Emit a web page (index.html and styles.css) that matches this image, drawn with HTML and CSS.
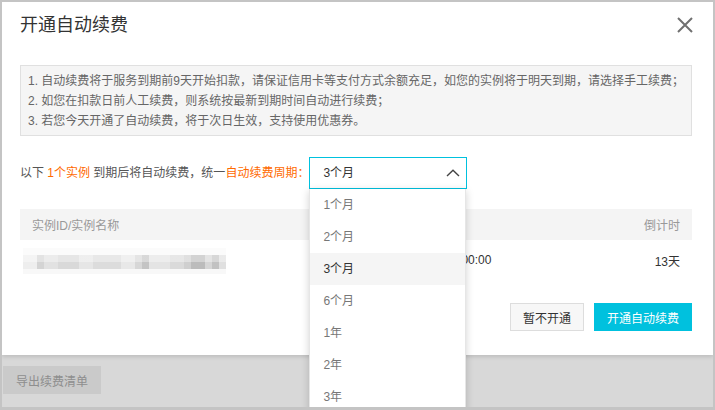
FILE: index.html
```html
<!DOCTYPE html>
<html lang="zh-CN">
<head>
<meta charset="utf-8">
<title>开通自动续费</title>
<link rel="stylesheet" href="styles.css">
</head>
<body>
<div class="frame">
    <div class="modal">
        <div class="modal-head">
            <h1>开通自动续费</h1>
            <svg class="close" width="16" height="16" viewBox="0 0 16 16">
                <path d="M1 1 L15 15 M15 1 L1 15" stroke="#707070" stroke-width="2" fill="none"/>
            </svg>
        </div>

        <div class="notice">
            <p>1. 自动续费将于服务到期前9天开始扣款，请保证信用卡等支付方式余额充足，如您的实例将于明天到期，请选择手工续费；</p>
            <p>2. 如您在扣款日前人工续费，则系统按最新到期时间自动进行续费；</p>
            <p>3. 若您今天开通了自动续费，将于次日生效，支持使用优惠券。</p>
        </div>

        <div class="period-row">
            <span>以下 <em>1个实例</em> 到期后将自动续费，统一<em>自动续费周期：</em></span>
            <div class="select">
                <div class="select-box">
                    <span>3个月</span>
                    <svg width="14" height="8" viewBox="0 0 14 8">
                        <polyline points="1,7 7,1.2 13,7" stroke="#444" stroke-width="1.4" fill="none"/>
                    </svg>
                </div>
                <ul class="options">
                    <li>1个月</li>
                    <li>2个月</li>
                    <li class="active">3个月</li>
                    <li>6个月</li>
                    <li>1年</li>
                    <li>2年</li>
                    <li>3年</li>
                </ul>
            </div>
        </div>

        <div class="grid grid-head">
            <span>实例ID/实例名称</span>
            <span>到期时间</span>
            <span>倒计时</span>
        </div>
        <div class="grid grid-row">
            <span class="blur"></span>
            <span>2019-03-20 00:00:00</span>
            <span class="num">13天</span>
        </div>

        <div class="actions">
            <button class="btn">暂不开通</button>
            <button class="btn btn-primary">开通自动续费</button>
        </div>
    </div>

    <div class="page-below">
        <button class="btn-export">导出续费清单</button>
    </div>
</div>
</body>
</html>
```

FILE: styles.css
```css
* { box-sizing: border-box; }
body { margin: 0; font-family: "Liberation Sans", "Noto Sans CJK SC", sans-serif; font-size: 12px; color: #333; }
p, ul, h1 { margin: 0; padding: 0; }
em { font-style: normal; color: #ff6a00; }
button { font-family: inherit; font-size: 12px; cursor: pointer; }

.frame { width: 715px; height: 410px; border: 2px solid #c4c4c4; border-bottom-width: 3px; overflow: hidden; background: #d8d8d8; }

/* dialog */
.modal { position: relative; z-index: 1; background: #fff; padding: 0 21px 24px 18px; box-shadow: 0 2px 4px rgba(0, 0, 0, .12); }
.modal-head { height: 46px; display: flex; align-items: center; justify-content: space-between; }
.modal-head h1 { font-size: 18px; font-weight: normal; color: #333; line-height: 24px; }
.close { margin-right: -1px; }

.notice { margin-top: 17px; background: #f5f5f5; border: 1px solid #e0e0e0; padding: 5px 7px 4px; color: #666; }
.notice p { line-height: 20px; white-space: nowrap; }

.period-row { margin-top: 21px; display: flex; align-items: center; color: #555; line-height: 20px; }
.select { position: relative; width: 158px; }
.select-box { height: 32px; border: 1px solid #00c1de; display: flex; align-items: center; justify-content: space-between; padding: 0 6px 0 13px; color: #333; }
.options { position: absolute; top: 100%; left: 0; z-index: 5; width: 157px; list-style: none; background: #fff; border: 1px solid #e6e6e6; border-top: none; box-shadow: 0 2px 8px rgba(0, 0, 0, .18); }
.options li { height: 32px; line-height: 32px; padding-left: 13px; color: #777; }
.options li.active { background: #f5f5f5; color: #333; }

/* instance table */
.grid { display: grid; grid-template-columns: 348px 1fr auto; align-items: center; padding: 0 12px; }
.grid-head { margin-top: 20px; height: 31px; background: #f4f4f4; color: #999; }
.grid-row { height: 40px; color: #333; }
.num { text-align: right; }
.blur { display: block; width: 203px; height: 26px; margin: 2px 0 0 -9px;
    background:
        linear-gradient(to bottom, #fbfbfb 0 7px, transparent 7px 21px, #f8f8f8 21px),
        linear-gradient(to bottom, transparent 0 7px, rgba(255, 255, 255, .35) 7px 14px, transparent 14px),
        linear-gradient(to right, #eee 0 14px, #d4d4d4 14px 21px, #e2e2e2 21px 35px, #d9d9d9 35px 56px, #e6e6e6 56px 70px, #dcdcdc 70px 98px, #e8e8e8 98px 112px, #d7d7d7 112px 119px, #c4c4c4 119px 126px, #e4e4e4 126px 147px, #dadada 147px 161px, #cfcfcf 161px 168px, #bcbcbc 168px 182px, #d6d6d6 182px 189px, #c2c2c2 189px 196px, #e0e0e0 196px 203px);
}

.actions { display: flex; justify-content: flex-end; gap: 10px; margin-top: 23px; }
.btn { height: 28px; padding: 0 12px; border: 1px solid #ddd; background: #f7f7f7; color: #333; }
.btn-primary { border-color: #00c1de; background: #00c1de; color: #fff; }

/* page behind the mask */
.page-below { padding: 11px 0 0 1px; }
.btn-export { width: 98px; height: 28px; border: none; background: #cacaca; color: #8e8e8e; }
```
